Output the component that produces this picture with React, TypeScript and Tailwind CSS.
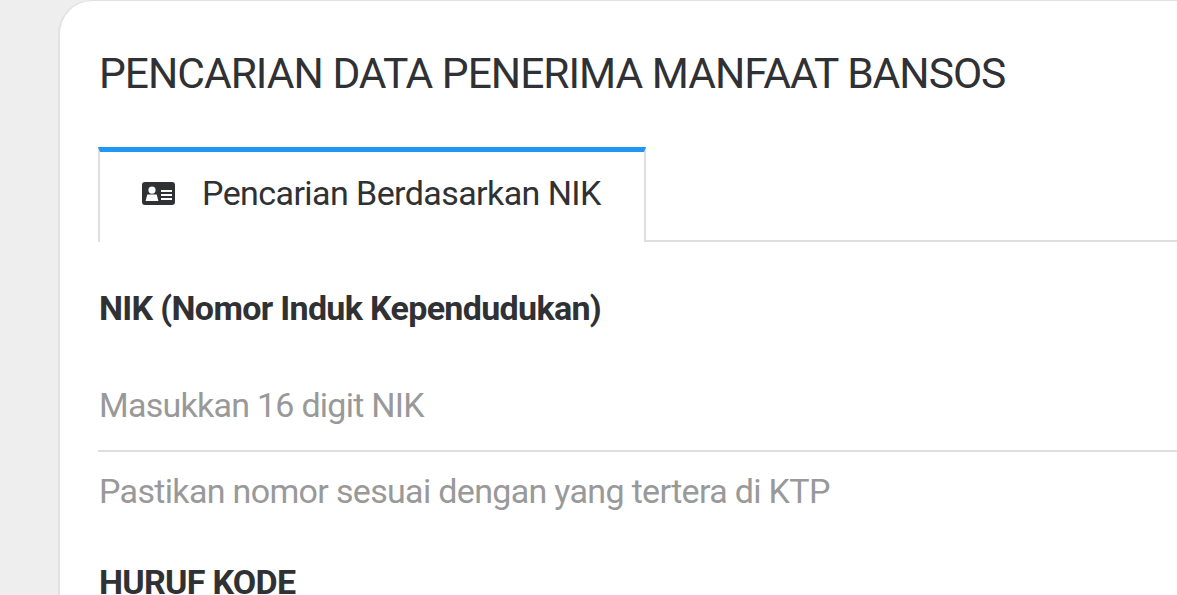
export default function App() {
  return (
    <div className="h-[595px] w-[1177px] overflow-hidden bg-[#eeeeee] pl-[58px] font-['Roboto',sans-serif]">
      <div className="h-[700px] w-[1300px] rounded-tl-[34px] border-t border-l-2 border-[#e2e2e2] bg-white pl-[38px] pt-[49px]">
        <h1 className="pl-[1px] text-[42.5px] leading-[48px] font-normal tracking-[-1px] text-[#2f3134]">PENCARIAN DATA PENERIMA MANFAAT BANSOS</h1>
        <div className="mt-[49px] flex h-[95px] border-b-2 border-[#dedede]">
          <div className="mb-[-2px] flex h-[95px] w-[548px] items-center gap-[27px] border-x-2 border-t-[5px] border-x-[#dedede] border-t-[#2196f3] bg-white pb-[8px] pl-[42px]">
            <svg viewBox="0 0 33 23" className="h-[23px] w-[33px] shrink-0" aria-hidden="true">
              <path fillRule="evenodd" fill="#2f3134" d="M3 0h27a3 3 0 0 1 3 3v17a3 3 0 0 1-3 3H3a3 3 0 0 1-3-3V3a3 3 0 0 1 3-3ZM10 4.5a3.6 3.6 0 1 0 0 7.2a3.6 3.6 0 0 0 0-7.2ZM5.3 12.5 3.6 19h12.8l-1.7-6.5ZM19 8v2h11V8ZM19 12v2h11v-2ZM19 16v2h11v-2Z" />
            </svg>
            <span className="text-[34px] leading-[40px] tracking-[-0.58px] text-[#2f3134]">Pencarian Berdasarkan NIK</span>
          </div>
        </div>
        <div className="mt-[46px] pl-[1px] text-[34px] leading-[40px] font-bold tracking-[-0.67px] text-[#2f3134]">NIK (Nomor Induk Kependudukan)</div>
        <div className="mt-[47px] h-[77px] border-b-2 border-[#dedede] pl-[1px] pt-[10px] text-[34px] leading-[40px] tracking-[-0.74px] text-[#999999]">Masukkan 16 digit NIK</div>
        <div className="mt-[19px] pl-[1px] text-[34px] leading-[40px] tracking-[-0.67px] text-[#999999]">Pastikan nomor sesuai dengan yang tertera di KTP</div>
        <div className="mt-[51px] pl-[1px] text-[34px] leading-[40px] font-bold tracking-[-0.72px] text-[#2f3134]">HURUF KODE</div>
      </div>
    </div>
  );
}
